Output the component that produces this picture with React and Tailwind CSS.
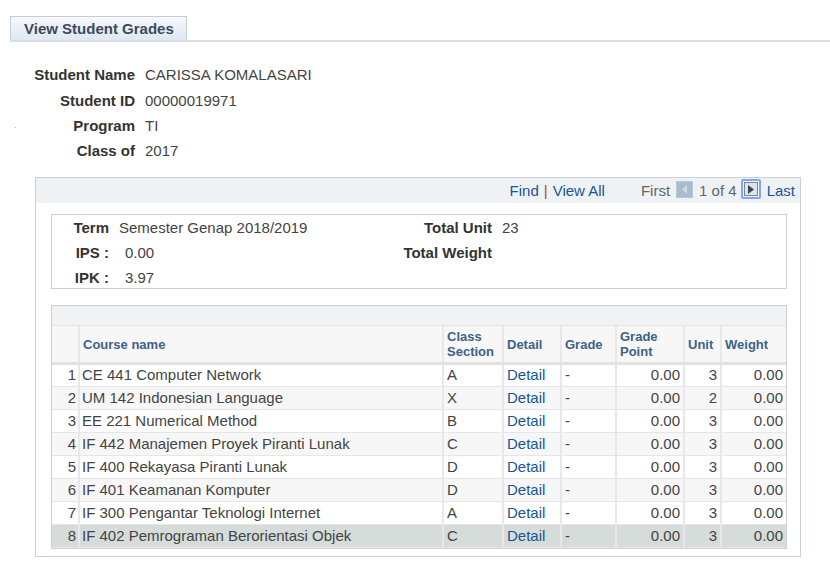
import React from 'react';

const courses = [
  { no: 1, name: 'CE 441 Computer Network', section: 'A', unit: 3 },
  { no: 2, name: 'UM 142 Indonesian Language', section: 'X', unit: 2 },
  { no: 3, name: 'EE 221 Numerical Method', section: 'B', unit: 3 },
  { no: 4, name: 'IF 442 Manajemen Proyek Piranti Lunak', section: 'C', unit: 3 },
  { no: 5, name: 'IF 400 Rekayasa Piranti Lunak', section: 'D', unit: 3 },
  { no: 6, name: 'IF 401 Keamanan Komputer', section: 'D', unit: 3 },
  { no: 7, name: 'IF 300 Pengantar Teknologi Internet', section: 'A', unit: 3 },
  { no: 8, name: 'IF 402 Pemrograman Berorientasi Objek', section: 'C', unit: 3 },
];

const info = [
  ['Student Name', 'CARISSA KOMALASARI'],
  ['Student ID', '00000019971'],
  ['Program', 'TI'],
  ['Class of', '2017'],
];

const App = () => {
  return (
    <div className="w-[830px] h-[587px] bg-white font-['Liberation_Sans',Arial,sans-serif] text-[15px] text-[#333] relative">
      {/* tab */}
      <div className="pt-[16px] pl-[10px]">
        <div className="flex items-end">
          <div className="w-[177px] h-[24px] border border-b-0 border-[#c5ccd5] bg-gradient-to-b from-[#f6f8fb] to-[#dfe7f1] pl-[13px] pt-[2px] text-[15px] leading-[20px] font-bold text-[#3b4a5b]">
            View Student Grades
          </div>
        </div>
        <div className="h-[2px] bg-[#d5dfeb]"></div>
      </div>

      <span className="absolute left-[15px] top-[127px] w-[1px] h-[1px] bg-[#bbb]"></span>

      {/* student info */}
      <div className="mt-[21px] flex flex-col">
        {info.map(([label, value]) => (
          <div key={label} className="flex h-[25.34px] items-center">
            <div className="w-[135px] text-right font-bold text-[#333]">{label}</div>
            <div className="pl-[10px] text-[#444]">{value}</div>
          </div>
        ))}
      </div>

      {/* main box */}
      <div className="ml-[35px] mt-[13px] w-[766px] border border-[#cdd1d6] pb-[7px]">
        <div className="h-[25px] bg-[#eef2f4] flex items-center justify-end pr-[5px]">
          <span className="text-[#1d5594]">Find</span>
          <span className="text-[#a24a2a] px-[5px]">|</span>
          <span className="text-[#1d5594]">View All</span>
          <span className="text-[#666] ml-[36px]">First</span>
          <span className="ml-[6px] w-[17px] h-[17px] bg-[#a9bccd] border border-[#b9c8d6] flex items-center justify-center mb-[3px]">
            <svg width="7" height="9" viewBox="0 0 7 9"><path d="M6 0 L1 4.5 L6 9 Z" fill="#cfdbe6" /></svg>
          </span>
          <span className="text-[#666] ml-[6px]">1 of 4</span>
          <span className="ml-[4px] w-[20px] h-[20px] border-2 border-[#7ea9ef] rounded-[2px] flex items-center justify-center mb-[3px]">
            <span className="w-[14px] h-[14px] bg-[#dde3ea] border border-[#7c8694] flex items-center justify-center">
              <svg width="6" height="9" viewBox="0 0 6 9"><path d="M0 0 L6 4.5 L0 9 Z" fill="#3c4654" /></svg>
            </span>
          </span>
          <span className="text-[#1d5594] ml-[6px]">Last</span>
        </div>

        <div className="ml-[15px] w-[736px]">
          {/* term box */}
          <div className="mt-[11px] h-[75px] border border-[#cdd1d6] grid grid-cols-[57px_260px_123px_1fr] grid-rows-[25px_25px_25px] items-center">
            <div className="text-right font-bold">Term</div>
            <div className="pl-[10px] text-[#444]">Semester Genap 2018/2019</div>
            <div className="text-right font-bold whitespace-nowrap">Total Unit</div>
            <div className="pl-[10px] text-[#444]">23</div>
            <div className="text-right font-bold">IPS :</div>
            <div className="pl-[16px] text-[#444]">0.00</div>
            <div className="text-right font-bold whitespace-nowrap">Total Weight</div>
            <div></div>
            <div className="text-right font-bold">IPK :</div>
            <div className="pl-[16px] text-[#444]">3.97</div>
            <div></div>
            <div></div>
          </div>

          {/* grid */}
          <div className="mt-[16px] border border-[#cdd1d6]">
            <div className="h-[20px] bg-[#f0f2f3] border-b border-[#e3e5e7]"></div>
            <table className="w-full border-collapse">
              <colgroup>
                <col className="w-[27px]" />
                <col className="w-[364px]" />
                <col className="w-[60px]" />
                <col className="w-[58px]" />
                <col className="w-[55px]" />
                <col className="w-[68px]" />
                <col className="w-[37px]" />
                <col />
              </colgroup>
              <thead>
                <tr className="h-[37px] bg-[#f7f7f7] border-b-[3px] border-[#e2e2e2] text-[13px] font-bold text-[#3f6289] leading-[15px]">
                  <th className="border-r-2 border-[#e8e8e8]"></th>
                  <th className="text-left font-bold pl-[3px] border-r-2 border-[#e8e8e8]">Course name</th>
                  <th className="text-left font-bold pl-[3px] border-r-2 border-[#e8e8e8]">Class<br />Section</th>
                  <th className="text-left font-bold pl-[3px] border-r-2 border-[#e8e8e8]">Detail</th>
                  <th className="text-left font-bold pl-[3px] border-r-2 border-[#e8e8e8]">Grade</th>
                  <th className="text-left font-bold pl-[3px] border-r-2 border-[#e8e8e8]">Grade<br />Point</th>
                  <th className="text-left font-bold pl-[3px] border-r-2 border-[#e8e8e8]">Unit</th>
                  <th className="text-left font-bold pl-[3px]">Weight</th>
                </tr>
              </thead>
              <tbody>
                {courses.map((c) => {
                  const bg = c.no === 8 ? 'bg-[#d6dcd9]' : c.no % 2 === 0 ? 'bg-[#f7f7f7]' : 'bg-white';
                  return (
                    <tr key={c.no} className={`h-[23px] ${bg} border-b border-[#e6e6e6] text-[#444] leading-[18px]`}>
                      <td className="text-right pr-[2px] border-r-2 border-[#e8e8e8]">{c.no}</td>
                      <td className="pl-[2px] border-r-2 border-[#e8e8e8]">{c.name}</td>
                      <td className="pl-[3px] border-r-2 border-[#e8e8e8]">{c.section}</td>
                      <td className="pl-[3px] border-r-2 border-[#e8e8e8] text-[#175595]">Detail</td>
                      <td className="pl-[3px] border-r-2 border-[#e8e8e8]">-</td>
                      <td className="text-right pr-[3px] border-r-2 border-[#e8e8e8]">0.00</td>
                      <td className="text-right pr-[3px] border-r-2 border-[#e8e8e8]">{c.unit}</td>
                      <td className="text-right pr-[3px]">0.00</td>
                    </tr>
                  );
                })}
              </tbody>
            </table>
          </div>
        </div>
      </div>
    </div>
  );
};

export default App;
